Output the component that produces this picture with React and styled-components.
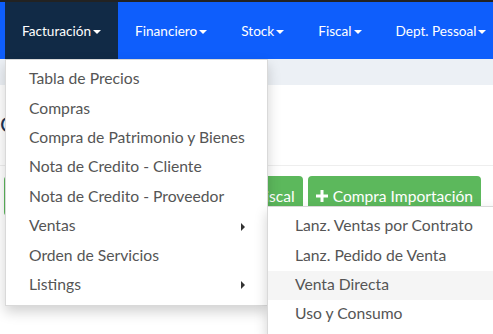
import styled, { createGlobalStyle } from 'styled-components'

const GlobalStyle = createGlobalStyle`
    body {
        margin: 0;
        font-family: 'Lato', 'Noto Sans', sans-serif;
        background: #ffffff;
        overflow: hidden;
    }
`

const Page = styled.div`
    position: relative;
    width: 493px;
    height: 334px;
    overflow: hidden;
`

const TopStrip = styled.div`
    height: 2px;
    background: #222;
`

const Navbar = styled.nav`
    display: flex;
    height: 57px;
    padding-left: 5px;
    background: #0e5efc;
`

const NavItem = styled.div`
    display: flex;
    align-items: center;
    padding: 0 17px;
    height: 100%;
    color: #fff;
    font-size: 13.6px;
    white-space: nowrap;
    background: ${p => (p.$active ? '#112a46' : 'transparent')};
`

const Caret = styled.span`
    display: inline-block;
    margin-left: 2px;
    margin-top: 2px;
    border-top: 4px solid #fff;
    border-left: 4px solid transparent;
    border-right: 4px solid transparent;
`

const Band = styled.div`
    height: 26px;
    background: #ecf0f5;
`

const Header = styled.div`
    height: 80px;
    border-bottom: 1px solid #eeeeee;
    display: flex;
    align-items: flex-start;
`

const Title = styled.h1`
    margin: 25px 0 0 0;
    font-size: 22px;
    font-weight: 400;
    color: #1d3557;
`

const ButtonRow = styled.div`
    display: flex;
    gap: 5px;
    padding: 10px 12px 0 4px;
`

const Button = styled.div`
    display: flex;
    align-items: center;
    justify-content: ${p => (p.$grow ? 'flex-end' : 'flex-start')};
    gap: 5px;
    flex: ${p => (p.$grow ? 1 : '0 0 auto')};
    height: 40px;
    padding: 0 8px;
    border-radius: 4px;
    background: #5cb85c;
    color: #fff;
    font-size: 15.6px;
    white-space: nowrap;
`

const Dropdown = styled.ul`
    position: absolute;
    top: 59px;
    left: 5px;
    width: 261px;
    margin: 0;
    padding: 5px 0;
    list-style: none;
    background: #fff;
    border: 1px solid rgba(0, 0, 0, 0.15);
    box-shadow: 0 6px 12px rgba(0, 0, 0, 0.18);
`

const Item = styled.li`
    position: relative;
    display: flex;
    align-items: center;
    box-sizing: border-box;
    height: 29.4px;
    padding: 0 23px 3px;
    font-size: 15.7px;
    color: #555;
    white-space: nowrap;
    background: ${p => (p.$hover ? '#f5f5f5' : 'transparent')};
`

const SubItem = styled(Item)`
    padding-left: 27px;
`

const Arrow = styled.span`
    position: absolute;
    right: 22px;
    top: 50%;
    margin-top: -4px;
    border-left: 4px solid #333;
    border-top: 4px solid transparent;
    border-bottom: 4px solid transparent;
`

const SubMenu = styled.ul`
    position: absolute;
    left: 100%;
    top: -6px;
    width: 240px;
    margin: 0;
    padding: 5px 0;
    list-style: none;
    background: #fff;
    border: 1px solid rgba(0, 0, 0, 0.15);
    box-shadow: 0 6px 12px rgba(0, 0, 0, 0.18);
`

const PlusIcon = () => (
    <svg width="12" height="12" viewBox="0 0 12 12">
        <rect x="4.5" y="0" width="3" height="12" fill="#fff" />
        <rect x="0" y="4.5" width="12" height="3" fill="#fff" />
    </svg>
)

const navItems = ['Facturación', 'Financiero', 'Stock', 'Fiscal', 'Dept. Pessoal']

const ventas = [
    'Lanz. Ventas por Contrato',
    'Lanz. Pedido de Venta',
    'Venta Directa',
    'Uso y Consumo',
]

export default function App() {
    return (
        <Page>
            <GlobalStyle />
            <TopStrip />
            <Navbar>
                {navItems.map((n, i) => (
                    <NavItem key={n} $active={i === 0}>
                        {n}
                        <Caret />
                    </NavItem>
                ))}
            </Navbar>
            <Band />
            <Header>
                <Title>Compras</Title>
            </Header>
            <ButtonRow>
                <Button $grow>
                    <PlusIcon />
                    Compra Nota Fiscal
                </Button>
                <Button>
                    <PlusIcon />
                    Compra Importación
                </Button>
            </ButtonRow>

            <Dropdown>
                <Item>Tabla de Precios</Item>
                <Item>Compras</Item>
                <Item>Compra de Patrimonio y Bienes</Item>
                <Item>Nota de Credito - Cliente</Item>
                <Item>Nota de Credito - Proveedor</Item>
                <Item>
                    Ventas
                    <Arrow />
                    <SubMenu>
                        {ventas.map(v => (
                            <SubItem key={v} $hover={v === 'Venta Directa'}>
                                {v}
                            </SubItem>
                        ))}
                    </SubMenu>
                </Item>
                <Item>Orden de Servicios</Item>
                <Item>
                    Listings
                    <Arrow />
                </Item>
            </Dropdown>
        </Page>
    )
}
